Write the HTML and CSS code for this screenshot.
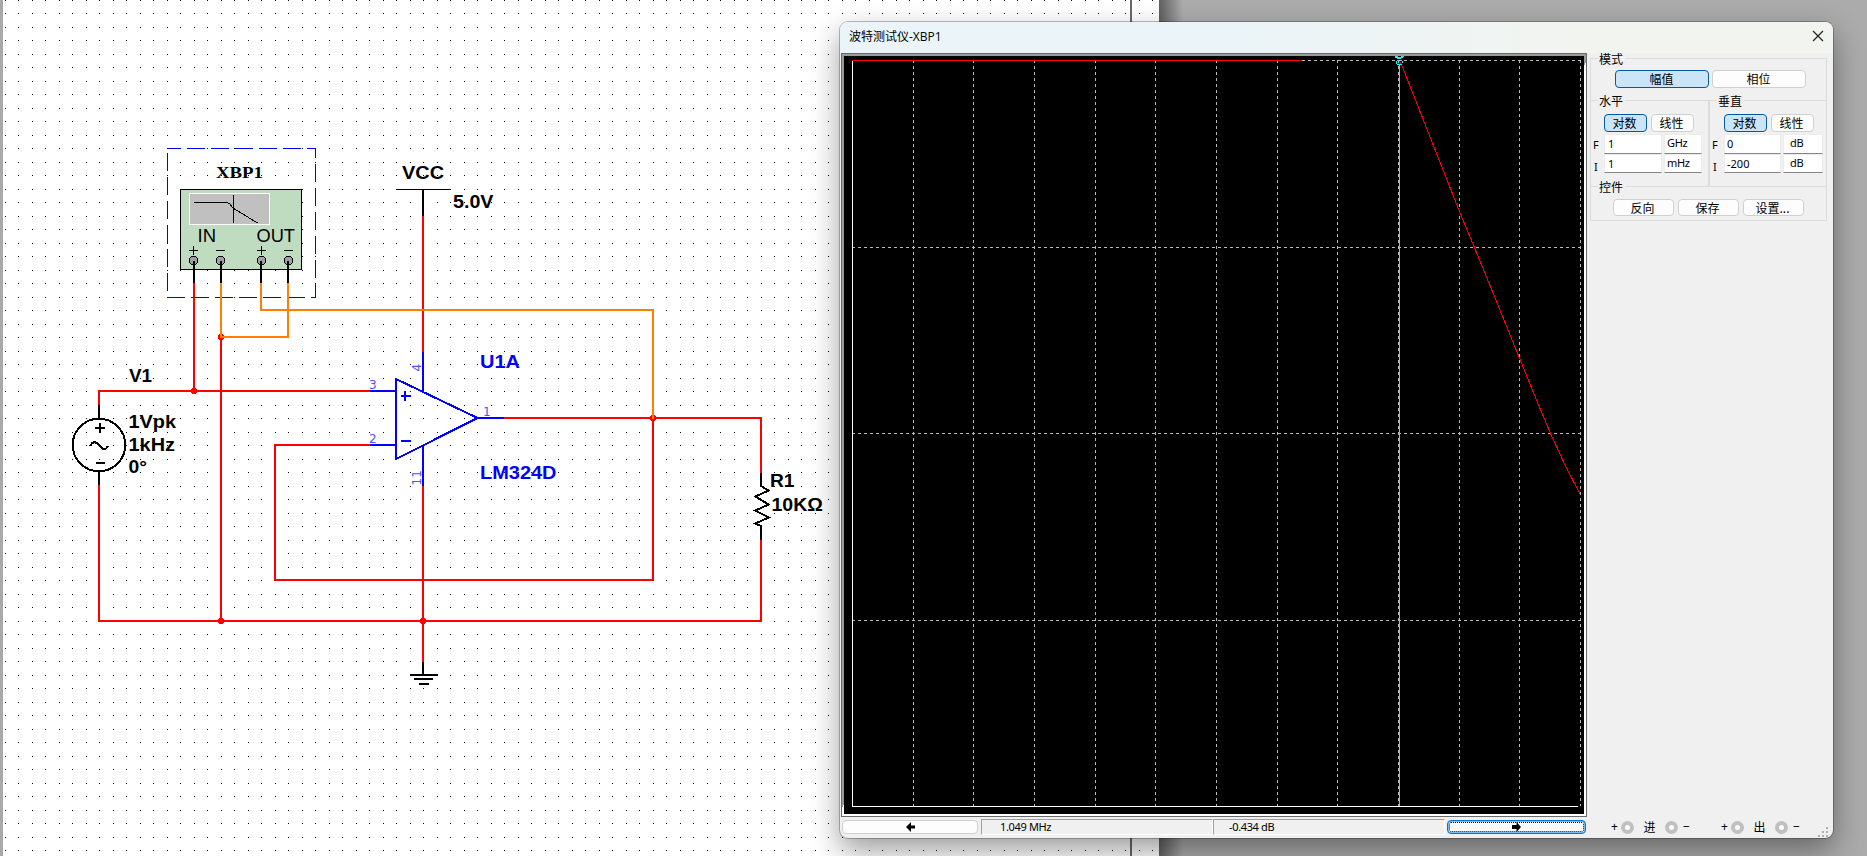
FILE: index.html
```html
<!DOCTYPE html>
<html lang="zh-CN">
<head>
<meta charset="utf-8">
<title>波特测试仪-XBP1</title>
<link rel="stylesheet" href="styles.css">
</head>
<body>
<main class="workspace">
  <div class="sheet">
    <svg class="schematic" width="1156" height="856" viewBox="3 0 1156 856">
      <defs>
        <pattern id="dots" width="27" height="27" patternUnits="userSpaceOnUse">
          <path d="M5 0h1v1h-1zM18 0h1v1h-1zM5 13h1v1h-1zM18 13h1v1h-1z"/>
        </pattern>
      </defs>
      <rect x="3" y="0" width="1156" height="856" fill="url(#dots)"/>
      <path class="margin-line" d="M1131 0V856"/>

      <!-- Bode plotter symbol -->
      <rect class="selection" x="167.5" y="148.5" width="148" height="149"/>
      <rect class="device" x="180.5" y="189.5" width="121" height="80"/>
      <rect class="device-screen" x="189.5" y="193.5" width="80" height="31"/>
      <path class="thin" d="M194 202.5H227L230 204L233 208L257.500 223M233.500 195V223"/>
      <g class="port"><circle cx="193.500" cy="260.500" r="4.200"/><circle cx="220.500" cy="260.500" r="4.200"/><circle cx="261.500" cy="260.500" r="4.200"/><circle cx="288.500" cy="260.500" r="4.200"/></g>
      <path class="thin" d="M189 250.500h9M193.500 246v9M216 250.500h9M257 250.500h9M261.500 246v9M284 250.500h9"/>

      <!-- Nets -->
      <g class="net">
        <path d="M194 283V391M221 337V621M99 406V391H370M99 485V621H761V540M423 216V352M504 418H761V473M370 445H275V580H653V418M423 486V662"/>
      </g>
      <g class="node"><circle cx="194" cy="391" r="3.100"/><circle cx="221" cy="337" r="3.100"/><circle cx="653" cy="418" r="3.100"/><circle cx="221" cy="621" r="3.100"/><circle cx="423" cy="621" r="3.100"/></g>
      <path class="net-out" d="M221 283V337H288V283M261 283V310H653V419"/>
      <path class="pin" d="M194 261V283M221 261V283M261 261V283M288 261V283M423 190V216M99 405V419M99 471V485M761 473V487M761 525V540M423 662V675M410 675H438M414 679H433M419 684H429"/>
      <path class="thin" d="M396 189.500H451"/>

      <!-- AC source -->
      <circle class="source" cx="99" cy="445" r="26.300"/>
      <path class="source" d="M95 427.500h10M99.500 423v10M96 463.300h9M90 446C92 442 95 441 98 444C101 448 105 452 108 446"/>
      <!-- Load resistor -->
      <path class="source" d="M761 486L768.500 490.500L755.500 496.500L768.500 504.500L755.500 510.500L768.500 517.500L755.500 523.500L761 526"/>
      <!-- Op-amp -->
      <path class="amp" d="M396 379V459L477.500 418ZM370 391H396M370 445H396M477 418H504M423 352V391M423 446V486M401 396H411M405 391V401M401 441H411"/>

      <g class="label">
        <text x="402" y="178.700" textLength="42" lengthAdjust="spacingAndGlyphs">VCC</text>
        <text x="453" y="207.700" textLength="40.500" lengthAdjust="spacingAndGlyphs">5.0V</text>
        <text x="129" y="381.700" textLength="23" lengthAdjust="spacingAndGlyphs">V1</text>
        <text x="128.500" y="428" textLength="47.500" lengthAdjust="spacingAndGlyphs">1Vpk</text>
        <text x="128.500" y="450.500" textLength="46.500" lengthAdjust="spacingAndGlyphs">1kHz</text>
        <text x="128.500" y="472.700" textLength="18.500" lengthAdjust="spacingAndGlyphs">0°</text>
        <text x="770" y="486.700" textLength="24.500" lengthAdjust="spacingAndGlyphs">R1</text>
        <text x="771.500" y="510.700" textLength="51.500" lengthAdjust="spacingAndGlyphs">10KΩ</text>
      </g>
      <text class="device-name" x="216" y="177.700" textLength="47" lengthAdjust="spacingAndGlyphs">XBP1</text>
      <g class="port-label">
        <text x="197.500" y="242" textLength="18.500" lengthAdjust="spacingAndGlyphs">IN</text>
        <text x="256.500" y="242" textLength="38.500" lengthAdjust="spacingAndGlyphs">OUT</text>
      </g>
      <g class="label part">
        <text x="480" y="368" textLength="40" lengthAdjust="spacingAndGlyphs">U1A</text>
        <text x="480" y="478.700" textLength="76.500" lengthAdjust="spacingAndGlyphs">LM324D</text>
      </g>
      <g class="pin-no">
        <text x="369" y="389">3</text>
        <text x="369" y="443">2</text>
        <text x="483" y="416">1</text>
        <text transform="translate(420.500 371.500) rotate(-90)">4</text>
        <text transform="translate(420.500 485.500) rotate(-90)">11</text>
      </g>
    </svg>
  </div>
  <div class="sheet-shadow"></div>

  <section class="window">
    <header class="titlebar">
      <span>波特测试仪-XBP1</span>
      <svg class="close" width="12" height="12" viewBox="0 0 12 12"><path d="M1 1L11 11M11 1L1 11"/></svg>
    </header>
    <div class="window-body">
      <div class="display">
        <div class="plot-frame">
          <svg class="plot" width="740" height="758" viewBox="844 56 740 758">
            <path class="grid" d="M913.500 60V806M973.500 60V806M1034.500 60V806M1095.500 60V806M1155.500 60V806M1216.500 60V806M1277.500 60V806M1337.500 60V806M1398.500 60V806M1459.500 60V806M1519.500 60V806M1580.500 60V806M852 60.500H1581M852 247.500H1581M852 433.500H1581M852 620.500H1581"/>
            <path class="axis" d="M852.500 60V806.500H1578"/>
            <path class="trace" d="M852 60.500H1302"/>
            <path class="trace" d="M1399.500 61L1402.500 67L1426.500 128L1459.500 211.500L1483.500 269.500L1536.500 400L1550.500 433.500L1565.500 466L1580 494"/>
            <path class="cursor" d="M1399.500 64V806"/>
            <path class="marker-fill" d="M1395 56h3v1h3v-1h3v1h-1v1h-2v1h-4v-1h-2v-1zM1396 61h1v3h-1zM1397 60h1v1h-1zM1401 60h1v1h-1zM1402 61h1v2h-1zM1397 64h5v1h-5zM1398 62h1v1h-1z"/>
          </svg>
        </div>
        <div class="readout">
          <button class="btn step" aria-label="left"><svg width="10" height="10" viewBox="0 0 10 10"><path d="M0 5L5 0V3.500H9V6.500H5V10Z"/></svg></button>
          <div class="field frequency">1.049 MHz</div>
          <div class="field">-0.434 dB</div>
          <button class="btn step focused" aria-label="right"><svg width="10" height="10" viewBox="0 0 10 10"><path d="M9 5L4.500 0V3H0V7H4.500V10Z"/></svg></button>
        </div>
      </div>
      <aside class="panel">
        <div class="group mode">
          <div class="legend">模式</div>
          <div class="row"><button class="btn wide on">幅值</button><button class="btn wide">相位</button></div>
        </div>
        <div class="axes">
          <div class="group axis-group">
            <div class="legend">水平</div>
            <div class="row"><button class="btn small on">对数</button><button class="btn small">线性</button></div>
            <div class="inputs">
              <label>F</label><div class="input">1</div><div class="input unit">GHz</div>
              <label>I</label><div class="input">1</div><div class="input unit">mHz</div>
            </div>
          </div>
          <div class="group axis-group vertical">
            <div class="legend">垂直</div>
            <div class="row"><button class="btn small on">对数</button><button class="btn small">线性</button></div>
            <div class="inputs">
              <label>F</label><div class="input">0</div><div class="input unit">dB</div>
              <label>I</label><div class="input">-200</div><div class="input unit">dB</div>
            </div>
          </div>
        </div>
        <div class="group controls">
          <div class="legend">控件</div>
          <div class="row"><button class="btn action">反向</button><button class="btn action">保存</button><button class="btn action">设置...</button></div>
        </div>
        <div class="terminals">
          <div class="terminal"><span>+</span><i class="ring"></i><b>进</b><i class="ring"></i><span>−</span></div>
          <div class="terminal"><span>+</span><i class="ring"></i><b>出</b><i class="ring"></i><span>−</span></div>
        </div>
      </aside>
    </div>
    <svg class="grip" width="12" height="12" viewBox="0 0 12 12"><path d="M8 1h2v2h-2zM4 5h2v2h-2zM8 5h2v2h-2zM0 9h2v2h-2zM4 9h2v2h-2zM8 9h2v2h-2z"/></svg>
  </section>
</main>
</body>
</html>
```
FILE: styles.css
```css
* { box-sizing: border-box; }
body { margin: 0; font-family: "Noto Sans", "Noto Sans CJK SC", sans-serif; font-size: 12px; color: #000; }
.workspace { position: relative; display: flex; width: 1867px; height: 856px; overflow: hidden; background: #ababab; }
.sheet { width: 1159px; height: 856px; border-left: 3px solid #a9a9a9; background: #fff; }
.schematic { display: block; shape-rendering: crispEdges; }
.sheet-shadow { width: 24px; background: linear-gradient(90deg, #606060, #6e6e6e 20%, #a0a0a0 85%, #ababab); }

.margin-line { stroke: #696969; stroke-width: 2; }
.selection { fill: none; stroke: #00f; stroke-dasharray: 18 6; stroke-dashoffset: 4.5; }
.device { fill: #c0dcc0; stroke: #000; }
.device-screen { fill: #c0c0c0; stroke: #fff; }
.thin { fill: none; stroke: #000; }
.port { fill: #a0a0a4; stroke: #000; }
.net, .net-out, .pin, .amp { fill: none; stroke-width: 2; }
.net { stroke: #f00; }
.net-out { stroke: #ff8000; }
.node { fill: #f00; }
.pin { stroke: #000; }
.amp { stroke: #00f; }
.source { fill: none; stroke: #000; stroke-width: 2; }
.label { font: bold 19px "Liberation Sans", sans-serif; }
.part { fill: #00f; }
.device-name { font: bold 16px "Liberation Serif", serif; }
.port-label { font: 18px "Liberation Sans", sans-serif; }
.pin-no { font: 12px "DejaVu Sans", sans-serif; fill: #5050ff; }

.window { position: absolute; left: 840px; top: 22px; width: 993px; height: 816px; border-radius: 8px; background: #f0f0f0; box-shadow: 0 0 0 1px rgba(0,0,0,.25), 0 12px 30px rgba(0,0,0,.4); overflow: visible; }
.titlebar { display: flex; justify-content: space-between; align-items: center; height: 31px; padding: 0 9px 3px; border-radius: 8px 8px 0 0; background: linear-gradient(90deg, #ebf4f9, #ebf4f8 40%, #f2f4f0 75%); font-family: "Open Sans", "Noto Sans CJK SC", sans-serif; }
.close { fill: none; stroke: #222; stroke-width: 1.2; }
.window-body { display: flex; height: 785px; }
.display { width: 747px; padding-left: 1px; }
.plot-frame { width: 746px; height: 764px; border: 1px solid #696969; padding: 2px; background: linear-gradient(135deg, #9a9a9a 50%, #fff 50%); }
.plot { display: block; background: #000; shape-rendering: crispEdges; }
.grid { stroke: #b8b8b8; stroke-dasharray: 3 3; }
.axis { fill: none; stroke: #fff; }
.trace { fill: none; stroke: #f00; }
.cursor { stroke: #0ff; }
.marker-fill { fill: #0ff; }

.readout { display: flex; padding-top: 2px; height: 21px; }
.btn { display: flex; align-items: center; justify-content: center; padding: 0; border: 1px solid #d0d0d0; border-radius: 4px; background: #fdfdfd; color: #000; font: 12px/12px "Noto Sans CJK SC", sans-serif; }
.btn.on { border-color: #005a9e; background: #cce4f7; }
.panel .btn { padding-right: 1px; }
.panel .action, .panel .small { padding-right: 2px; }
.step { flex: none; width: 136px; height: 14px; margin: 1px 3px 0 0; padding-left: 1px; }
.step:first-child { margin-left: 1px; }
.focused { width: 139px; margin: 1px 0 0 2px; border: 1px solid #0078d7; box-shadow: inset 0 0 0 .5px #0078d7; outline: 1px dotted #000; outline-offset: -3px; padding-left: 0; }
.field { flex: none; width: 232px; height: 16px; padding-left: 15px; border: 1px solid; border-color: #a0a0a0 #fff #fff #a0a0a0; font-size: 11px; line-height: 14px; letter-spacing: -.35px; }
.frequency { padding-left: 18px; }

.panel { flex: 1; display: flex; flex-direction: column; padding: 5px 6px 0 3px; }
.group { border: 1px solid #dcdcdc; border-bottom: 0; }
.legend { width: 27px; height: 16px; margin: -8px 0 0 7px; padding-left: 1px; background: #f0f0f0; font: 12px/15px "Noto Sans CJK SC", sans-serif; white-space: nowrap; }
.row { display: flex; }
.mode { height: 42px; }
.mode .row { gap: 3px; padding: 3px 0 0 24px; }
.wide { width: 94px; height: 18px; }
.axes { display: grid; grid-template-columns: 118px 119px; height: 86px; }
.axis-group { border-right: 0; }
.axis-group.vertical { border-left-width: 2px; border-right: 1px solid #dcdcdc; }
.axis-group .row { gap: 4px; padding: 5px 0 0 13px; }
.small { width: 43px; height: 18px; }
.vertical .row { padding-left: 14px; }
.inputs { display: grid; grid-template-columns: 11px 58px 38px; grid-template-rows: 20px 19px; column-gap: 2px; padding: 2px 0 0 0; font-size: 11px; }
.vertical .inputs { grid-template-columns: 12px 57px 40px; }
.inputs label { padding: 5px 0 0 2px; font: 11px/12px "Noto Sans", sans-serif; }
.inputs label:nth-of-type(2) { padding: 7px 0 0 3px; }
.input { border: 1px solid #ececec; border-bottom-color: #868686; padding-left: 3px; background: #fff; line-height: 17px; }
.unit { padding-left: 2px; letter-spacing: -.3px; line-height: 16px; }
.vertical .input { padding-left: 2px; }
.vertical .input.unit { padding-left: 6px; }
.controls { height: 35px; border-bottom: 1px solid #dcdcdc; }
.controls .row { gap: 4px; padding: 4px 0 0 22px; }
.action { width: 61px; height: 17px; }
.terminals { display: flex; gap: 26px; margin: auto 0 3px 21px; }
.terminal { display: flex; align-items: center; flex: none; width: 84px; height: 16px; }
.terminal span { flex: none; width: 10px; font: 12px/14px "Noto Sans", sans-serif; }
.terminal b { flex: none; width: 31px; text-align: center; font: 12px/14px "Noto Sans CJK SC", sans-serif; }
.ring { flex: none; width: 13px; height: 13px; border: 4px solid #c0c0c0; border-radius: 50%; background: #fff; }
.terminal .ring + span { margin-left: 5px; }
.grip { position: absolute; right: 3px; bottom: 0; fill: #b0b0b0; }
```
